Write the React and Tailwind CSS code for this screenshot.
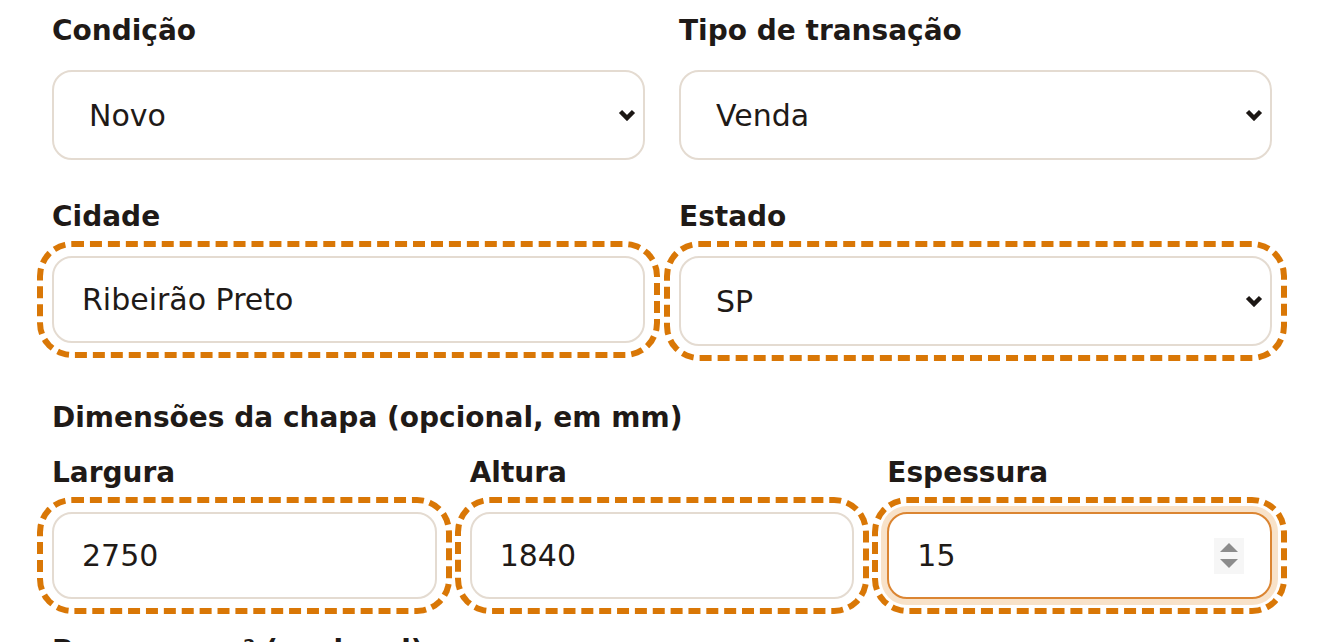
const ChevronDown = () => (
  <svg
    className="pointer-events-none absolute right-[9px] top-1/2 -translate-y-1/2"
    width="18"
    height="12"
    viewBox="0 0 18 12"
    fill="none"
  >
    <path d="M2.5 2.5 L9 9 L15.5 2.5" stroke="#1c1714" strokeWidth="4.5" strokeLinejoin="miter" />
  </svg>
);

const Spinner = () => (
  <div className="pointer-events-none absolute right-[28px] top-1/2 flex h-[36px] w-[30px] -translate-y-1/2 flex-col items-center justify-center gap-[7px] bg-[#f6f6f6]">
    <svg width="18" height="9" viewBox="0 0 18 9">
      <path d="M9 0 L18 9 L0 9 Z" fill="#8c8c8c" />
    </svg>
    <svg width="18" height="9" viewBox="0 0 18 9">
      <path d="M0 0 L18 0 L9 9 Z" fill="#8c8c8c" />
    </svg>
  </div>
);

const Label = ({ children, className = 'mb-[18px]' }) => (
  <label className={`block text-[28px] font-bold leading-[42px] text-[#1f1a17] ${className}`}>{children}</label>
);

const dashed = 'outline-[6px] outline-dashed outline-[#d97706] outline-offset-[9px]';

const SelectField = ({ label, value, options, highlight = false }) => (
  <div>
    <Label>{label}</Label>
    <div className={`relative rounded-[20px] ${highlight ? dashed : ''}`}>
      <select
        defaultValue={value}
        className="block h-[90px] w-full appearance-none rounded-[20px] border-2 border-[#e4dbd1] bg-white pl-[35px] pr-[50px] text-[30px] text-[#1f1a17] outline-none"
      >
        {options.map((o) => (
          <option key={o}>{o}</option>
        ))}
      </select>
      <ChevronDown />
    </div>
  </div>
);

const TextField = ({ label, value, type = 'text', focused = false }) => (
  <div>
    <Label>{label}</Label>
    <div className={`relative rounded-[20px] ${dashed}`}>
      <input
        type={type}
        defaultValue={value}
        className={
          focused
            ? 'block h-[87px] w-full rounded-[20px] border-2 border-[#db8532] bg-white px-[28px] text-[30px] text-[#1f1a17] shadow-[0_0_0_6px_#f8e2c9] outline-none [appearance:textfield] [&::-webkit-inner-spin-button]:appearance-none [&::-webkit-outer-spin-button]:appearance-none'
            : 'block h-[87px] w-full rounded-[20px] border-2 border-[#e4dbd1] bg-white px-[28px] text-[30px] text-[#1f1a17] outline-none [appearance:textfield] [&::-webkit-inner-spin-button]:appearance-none [&::-webkit-outer-spin-button]:appearance-none'
        }
      />
      {focused && <Spinner />}
    </div>
  </div>
);

export default function App() {
  return (
    <div className="min-h-screen overflow-hidden bg-white px-[52px] pt-[10px] font-['DejaVu_Sans','Noto_Sans',sans-serif] text-[#1f1a17]">
      <div className="grid grid-cols-2 gap-x-[34px]">
        <SelectField label="Condição" value="Novo" options={['Novo', 'Usado']} />
        <SelectField label="Tipo de transação" value="Venda" options={['Venda', 'Compra', 'Troca']} />
      </div>

      <div className="mt-[36px] grid grid-cols-2 gap-x-[34px]">
        <TextField label="Cidade" value="Ribeirão Preto" />
        <SelectField label="Estado" value="SP" options={['SP', 'RJ', 'MG', 'PR', 'SC']} highlight />
      </div>

      <div className="mt-[51px]">
        <Label className="mb-[13px]">Dimensões da chapa (opcional, em mm)</Label>
        <div className="grid grid-cols-3 gap-x-[33px]">
          <TextField label="Largura" value="2750" type="number" />
          <TextField label="Altura" value="1840" type="number" />
          <TextField label="Espessura" value="15" type="number" focused />
        </div>
      </div>

      <div className="mt-[31px]">
        <Label>Preço por m² (opcional)</Label>
      </div>
    </div>
  );
}
